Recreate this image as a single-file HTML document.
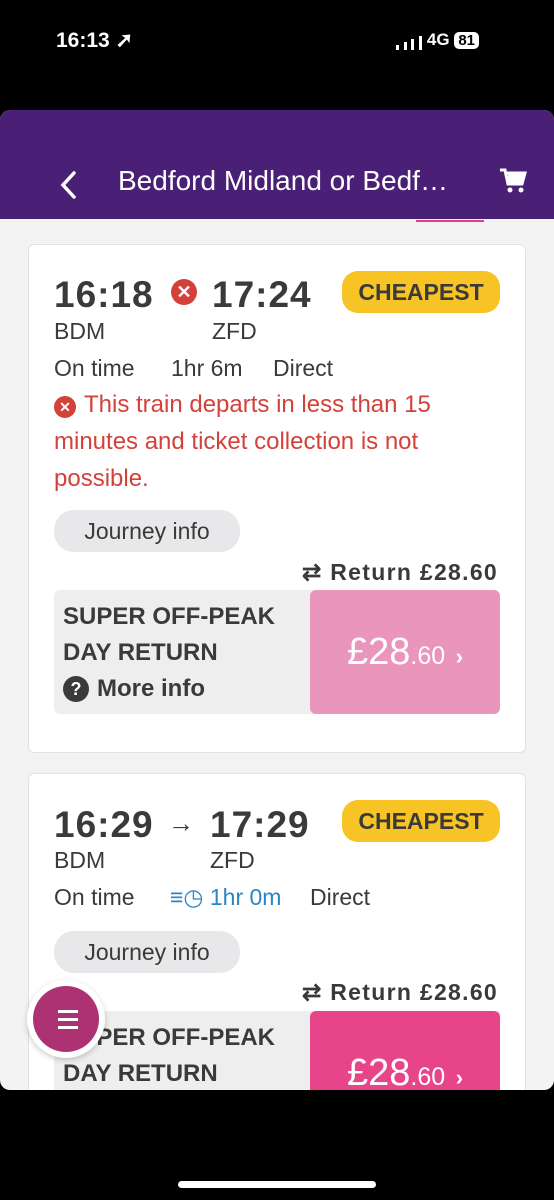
<!DOCTYPE html>
<html><head><meta charset="utf-8"><style>
*{margin:0;padding:0;box-sizing:border-box}
body{width:554px;height:1200px;background:#000;position:relative;overflow:hidden;font-family:"Liberation Sans",sans-serif;color:#3a3a3a}
.a{position:absolute;white-space:nowrap}
.card{position:absolute;left:28px;width:498px;background:#fff;border:1px solid #e2e2e2;border-radius:6px}
.t{font-size:37px;font-weight:bold;color:#3a3a3a;letter-spacing:1px}
.s{font-size:23px;color:#3a3a3a}
.badge{background:#f7c325;border-radius:16px;font-weight:bold;font-size:23px;color:#3a3a3a;width:158px;height:42px;line-height:42px;text-align:center}
.pill{background:#e8e8ea;border-radius:20px;font-size:23px;width:186px;height:42px;line-height:42px;text-align:center;color:#3a3a3a}
.ret{font-size:23px;font-weight:bold;color:#3a3a3a;letter-spacing:1.3px}
.fare{background:#eeeeee;border-radius:6px;width:446px;height:124px}
.fb{font-weight:bold;font-size:24px;color:#3a3a3a}
.price{border-radius:6px;width:190px;height:124px;color:#fff;font-size:38px;text-align:center;line-height:124px}
.price small{font-size:25px}
.red{font-size:24px;color:#d3413b}
</style></head><body>
<div class="a" style="left:56px;top:28px;color:#fff;font-size:21px;font-weight:bold">16:13 ➚</div>
<div class="a" style="left:396px;top:30px;color:#fff;font-size:17px;font-weight:bold">
<span style="display:inline-block;vertical-align:bottom;width:3px;height:5px;background:#fff"></span>
<span style="display:inline-block;vertical-align:bottom;width:3px;height:8px;background:#fff"></span>
<span style="display:inline-block;vertical-align:bottom;width:3px;height:11px;background:#fff"></span>
<span style="display:inline-block;vertical-align:bottom;width:3px;height:14px;background:#fff"></span> 4G <span style="display:inline-block;background:#fff;color:#000;border-radius:5px;padding:0 4px;font-size:15px">81</span></div>
<div class="a" style="left:0;top:110px;width:554px;height:980px;background:#f3f3f4;border-radius:10px"></div>
<div class="a" style="left:0;top:110px;width:554px;height:109px;background:#4a1f76;border-radius:10px 10px 0 0"></div>
<svg class="a" style="left:58px;top:170px" width="20" height="30"><path d="M16 3 L5 15 L16 27" stroke="#fff" stroke-width="3.5" fill="none" stroke-linecap="round"/></svg>
<div class="a" style="left:118px;top:165px;color:#fff;font-size:28px">Bedford Midland or Bedf…</div>
<svg class="a" style="left:498px;top:166px" width="30" height="30"><path d="M2 4h5l3 14h14l3-11H9" stroke="#fff" stroke-width="3" fill="none"/><rect x="10" y="8" width="15" height="9" fill="#fff"/><circle cx="12" cy="24" r="2.5" fill="#fff"/><circle cx="23" cy="24" r="2.5" fill="#fff"/></svg>
<div class="a" style="left:416px;top:220px;width:68px;height:2px;background:#e24088"></div>

<div class="card" style="top:244px;height:509px"></div>
<div class="a t" style="left:54px;top:274px">16:18</div>
<div class="a" style="left:171px;top:279px;width:26px;height:26px;border-radius:50%;background:#d3413b;color:#fff;text-align:center;line-height:26px;font-size:18px;font-weight:bold">✕</div>
<div class="a t" style="left:212px;top:274px">17:24</div>
<div class="a badge" style="left:342px;top:271px">CHEAPEST</div>
<div class="a s" style="left:54px;top:318px">BDM</div>
<div class="a s" style="left:212px;top:318px">ZFD</div>
<div class="a s" style="left:54px;top:355px">On time</div>
<div class="a s" style="left:171px;top:355px">1hr 6m</div>
<div class="a s" style="left:273px;top:355px">Direct</div>
<div class="a" style="left:54px;top:396px;width:22px;height:22px;border-radius:50%;background:#d3413b;color:#fff;text-align:center;line-height:22px;font-size:14px;font-weight:bold">✕</div>
<div class="a red" style="left:84px;top:391px">This train departs in less than 15</div>
<div class="a red" style="left:54px;top:428px">minutes and ticket collection is not</div>
<div class="a red" style="left:54px;top:465px">possible.</div>
<div class="a pill" style="left:54px;top:510px">Journey info</div>
<div class="a ret" style="left:302px;top:559px">⇄ Return £28.60</div>
<div class="a fare" style="left:54px;top:590px"></div>
<div class="a fb" style="left:63px;top:603px">SUPER OFF-PEAK</div>
<div class="a fb" style="left:63px;top:639px">DAY RETURN</div>
<div class="a" style="left:63px;top:676px;width:26px;height:26px;border-radius:50%;background:#3a3a3a;color:#fff;text-align:center;line-height:26px;font-size:18px;font-weight:bold">?</div>
<div class="a fb" style="left:97px;top:675px">More info</div>
<div class="a price" style="left:310px;top:590px;background:#ea95bb">£28<small>.60</small> <b style="font-size:22px">›</b></div>

<div class="card" style="top:773px;height:330px"></div>
<div class="a t" style="left:54px;top:804px">16:29</div>
<div class="a" style="left:168px;top:808px;font-size:26px;color:#3a3a3a">→</div>
<div class="a t" style="left:210px;top:804px">17:29</div>
<div class="a badge" style="left:342px;top:800px">CHEAPEST</div>
<div class="a s" style="left:54px;top:847px">BDM</div>
<div class="a s" style="left:210px;top:847px">ZFD</div>
<div class="a s" style="left:54px;top:884px">On time</div>
<div class="a" style="left:170px;top:884px;font-size:23px;color:#2a86c5">≡◷ 1hr 0m</div>
<div class="a s" style="left:310px;top:884px">Direct</div>
<div class="a pill" style="left:54px;top:931px">Journey info</div>
<div class="a ret" style="left:302px;top:979px">⇄ Return £28.60</div>
<div class="a fare" style="left:54px;top:1011px;height:79px;border-radius:6px 0 0 0"></div>
<div class="a fb" style="left:63px;top:1024px">SUPER OFF-PEAK</div>
<div class="a fb" style="left:63px;top:1060px">DAY RETURN</div>
<div class="a price" style="left:310px;top:1011px;height:79px;line-height:124px;background:#e8448a;border-radius:6px 6px 0 0;overflow:hidden">£28<small>.60</small> <b style="font-size:22px">›</b></div>
<div class="a" style="left:0;top:1090px;width:554px;height:110px;background:#000"></div>
<div class="a" style="left:27px;top:980px;width:78px;height:78px;border-radius:50%;background:#fff;box-shadow:0 2px 6px rgba(0,0,0,.2)"></div>
<div class="a" style="left:33px;top:986px;width:66px;height:66px;border-radius:50%;background:#ad3274"></div>
<div class="a" style="left:58px;top:1010px;width:20px;height:3px;background:#fff;box-shadow:0 8px 0 #fff,0 16px 0 #fff"></div>
<div class="a" style="left:178px;top:1181px;width:198px;height:7px;border-radius:4px;background:#fff"></div>
</body></html>
